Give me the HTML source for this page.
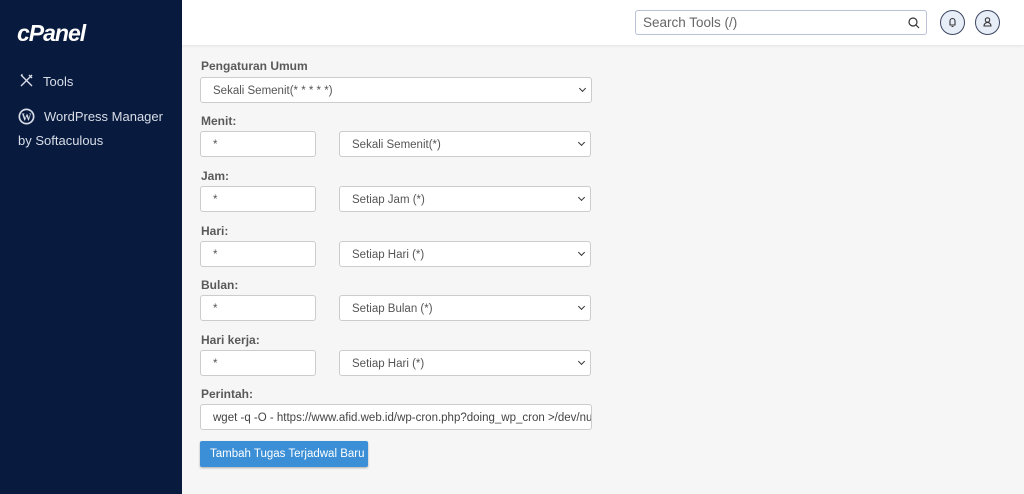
<!DOCTYPE html>
<html><head><meta charset="utf-8"><style>
*{box-sizing:border-box;margin:0;padding:0}
body{width:1024px;height:494px;overflow:hidden;background:#f6f6f6;font-family:"Liberation Sans",sans-serif;position:relative}
.side{position:absolute;left:0;top:0;width:182px;height:494px;background:#081a3d;color:#d8dde8;font-size:13px}
.logo{position:absolute;left:17px;top:20px;color:#fff;font-style:italic;font-weight:bold;font-size:23px;letter-spacing:-1px}
.top{position:absolute;left:182px;top:0;right:0;height:45px;background:#fff;box-shadow:0 1px 3px rgba(0,0,0,.08)}
.search{position:absolute;left:635px;top:10px;width:292px;height:25px;border:1px solid #b8c2d4;border-radius:3px;background:#fff;font-size:13.5px;color:#666;padding:4px 7px}
.circ{position:absolute;top:10px;width:25px;height:25px;border:1px solid #3b4660;border-radius:50%;background:#e8eef8}
.lbl{position:absolute;left:201px;font-size:12px;color:#333;font-weight:bold;opacity:.8}
.f{position:absolute;height:26px;background:#fff;border:1px solid #ccc;border-radius:3px;font-size:11.5px;color:#555;padding:7px 12px 0;white-space:nowrap}
.sel:after{content:"";position:absolute;right:6px;top:8px;width:4px;height:4px;border-right:1.5px solid #333;border-bottom:1.5px solid #333;transform:rotate(45deg)}
.btn{position:absolute;left:200px;top:441px;width:168px;height:26px;background:#3a8fd6;color:#fff;font-size:11.5px;border-radius:2px;box-shadow:0 1px 2px rgba(0,0,0,.3);padding:7px 0 0 10px;white-space:nowrap}
</style></head><body>
<div class="side">
<div class="logo">cPanel</div>
<svg style="position:absolute;left:19px;top:73px" width="15" height="15" viewBox="0 0 15 15" fill="none" stroke="#d8dde8" stroke-width="1.4"><path d="M2 13L13 2M10 2l3 3"/><path d="M2 2l11 11M2 2l1 0 0 1"/></svg>
<div style="position:absolute;left:43px;top:74px">Tools</div>
<svg style="position:absolute;left:18px;top:108px" width="17" height="17" viewBox="0 0 17 17"><circle cx="8.5" cy="8.5" r="8" fill="#d8dde8"/><circle cx="8.5" cy="8.5" r="6.3" fill="#081a3d"/><text x="8.5" y="12.5" font-size="10" font-weight="bold" fill="#d8dde8" text-anchor="middle" font-family="Liberation Serif">W</text></svg>
<div style="position:absolute;left:44px;top:109px">WordPress Manager</div>
<div style="position:absolute;left:18px;top:133px">by Softaculous</div>
</div>
<div class="top"></div>
<div class="search">Search Tools (/)<svg style="position:absolute;right:6px;top:6px" width="12" height="12" viewBox="0 0 12 12" fill="none" stroke="#333" stroke-width="1.2"><circle cx="5" cy="5" r="4"/><path d="M8 8l3 3"/></svg></div>
<div class="circ" style="left:940px"><svg width="23" height="23" viewBox="0 0 23 23" fill="none" stroke="#333" stroke-width="1.1"><path d="M8.5 14h6M9 14v-4a2.5 2.5 0 0 1 5 0v4M10.5 15.5h2"/></svg></div>
<div class="circ" style="left:975px"><svg width="23" height="23" viewBox="0 0 23 23" fill="none" stroke="#333" stroke-width="1.1"><circle cx="11.5" cy="9" r="2.2"/><path d="M8 15a3.5 3.5 0 0 1 7 0z"/></svg></div>

<div class="lbl" style="top:59px">Pengaturan Umum</div>
<div class="f sel" style="left:200px;top:77px;width:392px">Sekali Semenit(* * * * *)</div>

<div class="lbl" style="top:114px">Menit:</div>
<div class="f" style="left:200px;top:131px;width:116px">*</div>
<div class="f sel" style="left:339px;top:131px;width:252px">Sekali Semenit(*)</div>

<div class="lbl" style="top:169px">Jam:</div>
<div class="f" style="left:200px;top:186px;width:116px">*</div>
<div class="f sel" style="left:339px;top:186px;width:252px">Setiap Jam (*)</div>

<div class="lbl" style="top:224px">Hari:</div>
<div class="f" style="left:200px;top:241px;width:116px">*</div>
<div class="f sel" style="left:339px;top:241px;width:252px">Setiap Hari (*)</div>

<div class="lbl" style="top:278px">Bulan:</div>
<div class="f" style="left:200px;top:295px;width:116px">*</div>
<div class="f sel" style="left:339px;top:295px;width:252px">Setiap Bulan (*)</div>

<div class="lbl" style="top:333px">Hari kerja:</div>
<div class="f" style="left:200px;top:350px;width:116px">*</div>
<div class="f sel" style="left:339px;top:350px;width:252px">Setiap Hari (*)</div>

<div class="lbl" style="top:387px">Perintah:</div>
<div class="f" style="left:200px;top:404px;width:392px;overflow:hidden;color:#444;font-size:11.5px;padding-left:12px">wget -q -O - https://www.afid.web.id/wp-cron.php?doing_wp_cron &gt;/dev/null</div>

<div class="btn">Tambah Tugas Terjadwal Baru</div>
</body></html>
